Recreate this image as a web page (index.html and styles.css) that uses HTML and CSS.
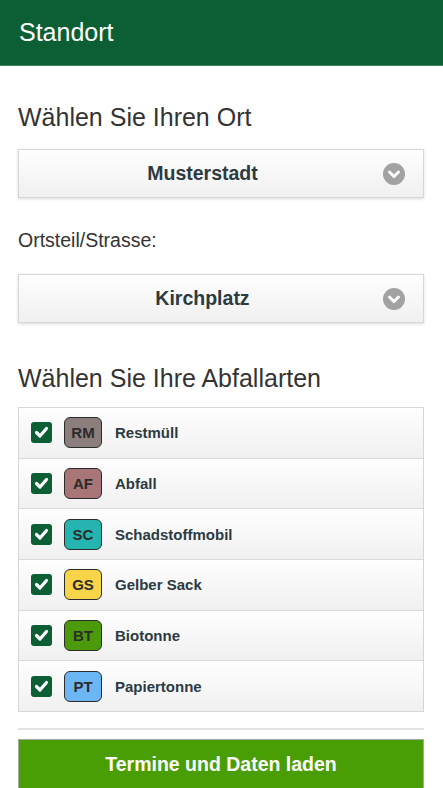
FILE: index.html
```html
<!DOCTYPE html>
<html lang="de">
<head>
<meta charset="utf-8">
<title>Standort</title>
<link rel="stylesheet" href="styles.css">
</head>
<body>
<header class="header"><h1 class="title">Standort</h1></header>
<main class="content">
  <h2 class="heading heading-first">Wählen Sie Ihren Ort</h2>
  <div class="select select-ort">
    <span class="select-text">Musterstadt</span>
    <svg class="select-icon" viewBox="0 0 22 22" width="22" height="22"><circle cx="11" cy="11" r="11" fill="#a2a2a2"/><path d="M6.5 9 L11 13.5 L15.5 9" fill="none" stroke="#fff" stroke-width="3" stroke-linecap="round" stroke-linejoin="round"/></svg>
  </div>
  <div class="label">Ortsteil/Strasse:</div>
  <div class="select select-str">
    <span class="select-text">Kirchplatz</span>
    <svg class="select-icon" viewBox="0 0 22 22" width="22" height="22"><circle cx="11" cy="11" r="11" fill="#a2a2a2"/><path d="M6.5 9 L11 13.5 L15.5 9" fill="none" stroke="#fff" stroke-width="3" stroke-linecap="round" stroke-linejoin="round"/></svg>
  </div>
  <h2 class="heading heading-second">Wählen Sie Ihre Abfallarten</h2>
  <ul class="list">
    <li class="row"><span class="check"><svg viewBox="0 0 21 21" width="21" height="21"><path d="M5.5 10.5 L9 14 L15.5 6.5" fill="none" stroke="#fff" stroke-width="3.2" stroke-linecap="round" stroke-linejoin="round"/></svg></span><span class="badge badge-rm">RM</span><span class="name">Restmüll</span></li>
    <li class="row"><span class="check"><svg viewBox="0 0 21 21" width="21" height="21"><path d="M5.5 10.5 L9 14 L15.5 6.5" fill="none" stroke="#fff" stroke-width="3.2" stroke-linecap="round" stroke-linejoin="round"/></svg></span><span class="badge badge-af">AF</span><span class="name">Abfall</span></li>
    <li class="row"><span class="check"><svg viewBox="0 0 21 21" width="21" height="21"><path d="M5.5 10.5 L9 14 L15.5 6.5" fill="none" stroke="#fff" stroke-width="3.2" stroke-linecap="round" stroke-linejoin="round"/></svg></span><span class="badge badge-sc">SC</span><span class="name">Schadstoffmobil</span></li>
    <li class="row"><span class="check"><svg viewBox="0 0 21 21" width="21" height="21"><path d="M5.5 10.5 L9 14 L15.5 6.5" fill="none" stroke="#fff" stroke-width="3.2" stroke-linecap="round" stroke-linejoin="round"/></svg></span><span class="badge badge-gs">GS</span><span class="name">Gelber Sack</span></li>
    <li class="row"><span class="check"><svg viewBox="0 0 21 21" width="21" height="21"><path d="M5.5 10.5 L9 14 L15.5 6.5" fill="none" stroke="#fff" stroke-width="3.2" stroke-linecap="round" stroke-linejoin="round"/></svg></span><span class="badge badge-bt">BT</span><span class="name">Biotonne</span></li>
    <li class="row"><span class="check"><svg viewBox="0 0 21 21" width="21" height="21"><path d="M5.5 10.5 L9 14 L15.5 6.5" fill="none" stroke="#fff" stroke-width="3.2" stroke-linecap="round" stroke-linejoin="round"/></svg></span><span class="badge badge-pt">PT</span><span class="name">Papiertonne</span></li>
  </ul>
  <hr class="separator">
  <div class="button">Termine und Daten laden</div>
</main>
</body>
</html>
```

FILE: styles.css
```css
html, body {
  margin: 0;
  padding: 0;
  background: #fff;
  font-family: "Liberation Sans", Arial, sans-serif;
  color: #333;
}

.header {
  background: #0c5e35;
  height: 65px;
  border-bottom: 1px solid #3f8560;
  display: flex;
  align-items: center;
  padding: 0 19px;
  box-sizing: content-box;
}

.title {
  margin: 0;
  font-size: 25px;
  font-weight: normal;
  color: #fff;
  line-height: 30px;
  padding-bottom: 1px;
}

.content {
  padding: 0 19px 0 18px;
}

.heading {
  font-size: 25px;
  font-weight: normal;
  line-height: 30px;
  margin: 0;
  color: #333;
}

.heading-first {
  padding-top: 36px;
  margin-bottom: 17px;
}

.heading-second {
  margin-top: 40px;
  margin-bottom: 14px;
}

.select {
  height: 47px;
  border: 1px solid #d6d6d6;
  background: linear-gradient(#fefefe, #f0f0f0);
  box-shadow: 0 1px 3px rgba(0, 0, 0, 0.15);
  display: flex;
  align-items: center;
  padding: 0 18px 0 16px;
}

.select-text {
  flex: 1;
  text-align: center;
  font-size: 19.5px;
  font-weight: bold;
  color: #2c3a42;
  padding-right: 13px;
}

.select-icon {
  display: block;
  flex: none;
}

.label {
  font-size: 19.5px;
  line-height: 24px;
  margin: 30px 0 22px;
  color: #333;
}

.list {
  list-style: none;
  margin: 0;
  padding: 0;
  border: 1px solid #d6d6d6;
}

.row {
  height: 49.7px;
  display: flex;
  align-items: center;
  padding-left: 12px;
  background: linear-gradient(#fefefe, #f0f0f0);
  border-top: 1px solid #d9d9d9;
}

.row:first-child {
  border-top: none;
}

.check {
  width: 21px;
  height: 21px;
  border-radius: 3px;
  background: #0c5e35;
  display: flex;
  flex: none;
}

.check svg {
  display: block;
}

.badge {
  margin-left: 12px;
  width: 36px;
  height: 29px;
  border: 1.5px solid #2b2b2b;
  border-radius: 6px;
  display: flex;
  align-items: center;
  justify-content: center;
  font-size: 15px;
  font-weight: bold;
  color: #2b2b2b;
  flex: none;
}

.badge-rm { background: #8b7e7c; }
.badge-af { background: #a87676; }
.badge-sc { background: #25b5b0; }
.badge-gs { background: #f8d448; }
.badge-bt { background: #4a9a09; }
.badge-pt { background: #6db6f6; }

.name {
  margin-left: 13px;
  font-size: 15px;
  font-weight: bold;
  color: #2c3a42;
}

.separator {
  margin: 16px 0 0;
  border: none;
  border-top: 2px solid #e2e2e2;
  height: 0;
}

.button {
  margin-top: 9px;
  height: 49px;
  background: #4a9e05;
  border: 1px solid #a4a89e;
  color: #fff;
  font-size: 19.5px;
  font-weight: bold;
  display: flex;
  align-items: center;
  justify-content: center;
}
```
